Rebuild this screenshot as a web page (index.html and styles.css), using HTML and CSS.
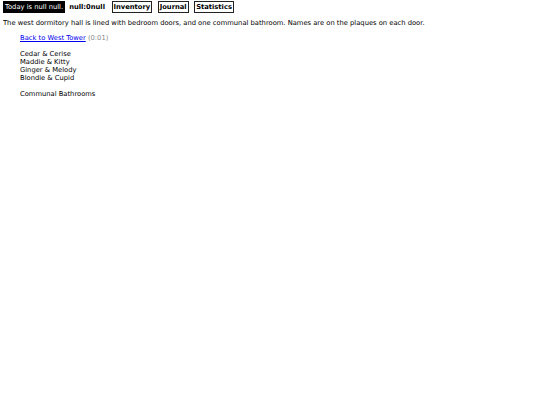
FILE: index.html
```html
<!DOCTYPE html>
<html>
<head>
<meta charset="utf-8">
<link rel="stylesheet" href="styles.css">
</head>
<body>
<div class="topbar">
  <span class="today">Today is null null.</span>
  <span class="clock">null:0null</span>
  <span class="btn">Inventory</span>
  <span class="btn">Journal</span>
  <span class="btn">Statistics</span>
</div>
<p class="desc">The west dormitory hall is lined with bedroom doors, and one communal bathroom. Names are on the plaques on each door.</p>
<div class="content">
  <div class="back"><a href="#">Back to West Tower</a> <span class="time">(0:01)</span></div>
  <div class="list">
    <div>Cedar &amp; Cerise</div>
    <div>Maddie &amp; Kitty</div>
    <div>Ginger &amp; Melody</div>
    <div>Blondie &amp; Cupid</div>
  </div>
  <div class="list">
    <div>Communal Bathrooms</div>
  </div>
</div>
</body>
</html>
```

FILE: styles.css
```css
html, body { background: #fff; }
body {
  margin: 1px 3px;
  font-family: "DejaVu Sans", Verdana, sans-serif;
  font-size: 6.75px;
  line-height: 8px;
  color: #000;
}
.topbar {
  display: flex;
  align-items: center;
  gap: 5.5px;
  height: 12px;
}
.today {
  background: #000;
  color: #fff;
  padding: 2px 2px;
  line-height: 8px;
  margin-right: -1.5px;
}
.clock { font-weight: bold; margin: 0 1px 0 0; }
.btn {
  font-weight: bold;
  border: 1px solid #222;
  padding: 1px 1px;
  line-height: 8px;
}
.desc { margin: 6px 0 0 0; }
.content { padding-left: 17px; margin-top: 7px; }
.back a { color: #00e; }
.time { color: #888; }
.list { margin-top: 8px; }
```
